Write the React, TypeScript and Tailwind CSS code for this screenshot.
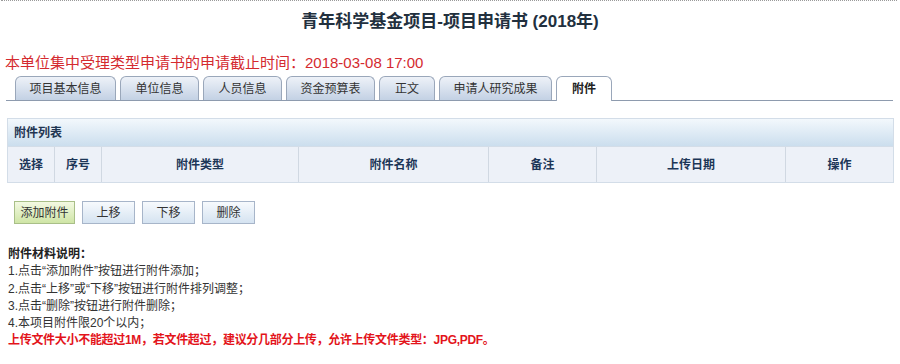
import React from "react";

const tabs = [
  { label: "项目基本信息", w: "w-[101px]" },
  { label: "单位信息", w: "w-[79px]" },
  { label: "人员信息", w: "w-[79px]" },
  { label: "资金预算表", w: "w-[89px]" },
  { label: "正文", w: "w-[56px]" },
  { label: "申请人研究成果", w: "w-[113px]" },
  { label: "附件", w: "w-[56px]", active: true },
];

const columns = [
  { label: "选择", w: "w-[46px]" },
  { label: "序号", w: "w-[47px]" },
  { label: "附件类型", w: "w-[197px]" },
  { label: "附件名称", w: "w-[190px]" },
  { label: "备注", w: "w-[108px]" },
  { label: "上传日期", w: "w-[189px]" },
  { label: "操作", w: "flex-1" },
];

const notes = [
  "1.点击\u201c添加附件\u201d按钮进行附件添加；",
  "2.点击\u201c上移\u201d或\u201c下移\u201d按钮进行附件排列调整；",
  "3.点击\u201c删除\u201d按钮进行附件删除；",
  "4.本项目附件限20个以内；",
];

export default function App() {
  return (
    <div className="w-[900px] h-[364px] bg-white overflow-hidden text-[12px] text-[#333] font-['Liberation_Sans','Noto_Sans_CJK_SC',sans-serif]">
      {/* top dotted rule */}
      <div className="mx-[1px] mr-[3px] border-t border-dotted border-[#9a9a9a]" />

      {/* title */}
      <h1 className="mt-[11px] h-[20px] text-center text-[17px] leading-[20px] font-bold text-[#22303e]">
        青年科学基金项目-项目申请书 (2018年)
      </h1>

      {/* deadline */}
      <p className="mt-[21px] pl-[5px] text-[15px] leading-[20px] text-[#d42a2f]">
        本单位集中受理类型申请书的申请截止时间：2018-03-08 17:00
      </p>

      {/* tabs */}
      <div className="mt-[3px] ml-[6px] w-[887px] h-[25px] flex items-end gap-[4px] pl-[9px] border-b border-[#8e9bae]">
        {tabs.map((t) => (
          <div
            key={t.label}
            className={
              t.active
                ? `${t.w} h-[25px] -mb-px flex items-center justify-center rounded-t-[6px] border border-b-0 border-[#9aa7ba] bg-white font-bold text-[#222]`
                : `${t.w} h-[24px] flex items-center justify-center rounded-t-[6px] border border-b-0 border-[#9aa7ba] bg-gradient-to-b from-[#eef2f8] to-[#c3d1e4] text-[#333]`
            }
          >
            {t.label}
          </div>
        ))}
      </div>

      {/* attachment table */}
      <div className="mt-[17px] ml-[7px] w-[887px] border border-[#d3dde8]">
        <div className="h-[27px] pl-[6px] flex items-center bg-gradient-to-b from-[#f3f8fc] to-[#cbdeee] font-bold text-[#1f3552]">
          附件列表
        </div>
        <div className="h-[36px] flex bg-[#edf1f8] border-t border-[#d3dde8]">
          {columns.map((c, i) => (
            <div
              key={c.label}
              className={`${c.w} flex items-center justify-center font-bold text-[#1c3657] ${i > 0 ? "border-l border-[#d0d8e2]" : ""}`}
            >
              {c.label}
            </div>
          ))}
        </div>
      </div>

      {/* action buttons */}
      <div className="mt-[18px] ml-[14px] flex gap-[7px]">
        <button className="w-[61px] h-[23px] border border-[#a9bf88] bg-gradient-to-b from-[#f3f9e2] to-[#cfe5a6] text-[#333]">
          添加附件
        </button>
        {["上移", "下移", "删除"].map((b) => (
          <button
            key={b}
            className="w-[53px] h-[23px] border border-[#a7b5c9] bg-gradient-to-b from-[#f7fafd] to-[#d5e3f1] text-[#333]"
          >
            {b}
          </button>
        ))}
      </div>

      {/* notes */}
      <div className="mt-[22px] pl-[8px] leading-[17.3px]">
        <p className="font-bold text-[#222]">附件材料说明：</p>
        {notes.map((n) => (
          <p key={n}>{n}</p>
        ))}
        <p className="font-bold text-[#e3141b] tracking-[-0.3px]">
          上传文件大小不能超过1M，若文件超过，建议分几部分上传，允许上传文件类型：JPG,PDF。
        </p>
      </div>
    </div>
  );
}
